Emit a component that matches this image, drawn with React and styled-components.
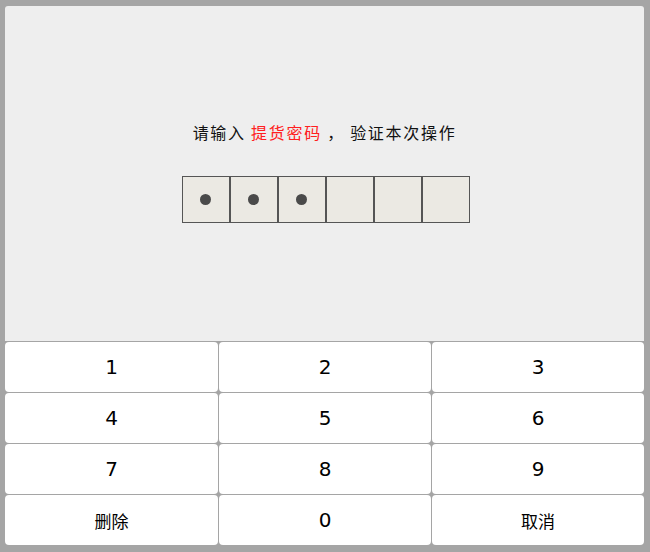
import styled, { createGlobalStyle } from "styled-components";

const GlobalStyle = createGlobalStyle`
  html, body {
    margin: 0;
    padding: 0;
    background: #a5a5a5;
  }
`;

const Frame = styled.div`
  width: 650px;
  height: 552px;
  box-sizing: border-box;
  padding: 6px 6px 7px 5px;
  display: flex;
  flex-direction: column;
  gap: 1px;
  background: #a5a5a5;
  font-family: "Noto Sans CJK SC", "DejaVu Sans", sans-serif;
`;

const Panel = styled.div`
  height: 335px;
  background: #eeeeee;
  border-radius: 3px 3px 0 0;
  display: flex;
  flex-direction: column;
  align-items: center;
  padding-top: 110px;
  box-sizing: border-box;
`;

const Prompt = styled.div`
  font-size: 16px;
  letter-spacing: 1.7px;
  color: #111;
  line-height: 32px;
  height: 32px;
`;

const Mark = styled.span`
  color: #ff2020;
`;

const Boxes = styled.div`
  display: flex;
  margin-top: 28px;
  margin-left: 2px;
`;

const Box = styled.div`
  width: 48px;
  height: 47px;
  box-sizing: border-box;
  border: 1px solid #555;
  background: #ebe9e3;
  display: flex;
  align-items: center;
  justify-content: center;
`;

const Dot = styled.span`
  width: 11px;
  height: 11px;
  border-radius: 50%;
  background: #4a4a4a;
`;

const Keypad = styled.div`
  display: grid;
  grid-template-columns: 213px 212px 212px;
  grid-auto-rows: 50px;
  gap: 1px;
`;

const Key = styled.button`
  border: none;
  margin: 0;
  padding: 0;
  background: #fff;
  border-radius: 4px;
  color: #000;
  font-family: ${(p) =>
    p.$text ? `"Noto Sans CJK SC", sans-serif` : `"DejaVu Sans", sans-serif`};
  font-size: ${(p) => (p.$text ? "17px" : "20px")};
  display: flex;
  align-items: center;
  justify-content: center;
  cursor: pointer;
`;

const keys = ["1", "2", "3", "4", "5", "6", "7", "8", "9", "删除", "0", "取消"];

export default function App() {
  const filled = 3;
  return (
    <>
      <GlobalStyle />
      <Frame>
        <Panel>
          <Prompt>
            请输入 <Mark>提货密码</Mark> ， 验证本次操作
          </Prompt>
          <Boxes>
            {Array.from({ length: 6 }).map((_, i) => (
              <Box key={i}>{i < filled && <Dot />}</Box>
            ))}
          </Boxes>
        </Panel>
        <Keypad>
          {keys.map((k) => (
            <Key key={k} $text={k.length > 1}>
              {k}
            </Key>
          ))}
        </Keypad>
      </Frame>
    </>
  );
}
